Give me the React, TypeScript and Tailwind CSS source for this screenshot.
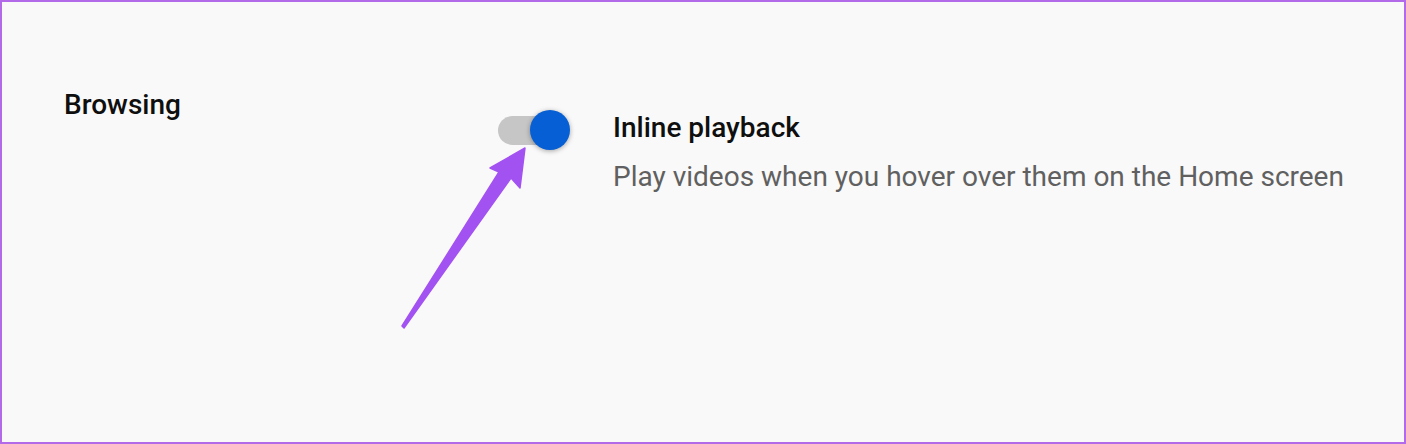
export default function App() {
  return (
    <div className="relative w-[1406px] h-[444px] border-2 border-[#b36ae8] bg-[#f9f9f9] font-['Roboto',sans-serif]">
      <div className="flex pl-[62px] pt-[87px]">
        <div className="w-[434px] text-[28px] leading-[32px] font-medium text-[#0f0f0f]">Browsing</div>

        <div className="flex pt-[23px]">
          {/* toggle */}
          <div className="relative w-[72px] h-[40px] -mt-[2px]">
            <div className="absolute left-0 top-[6px] w-[52px] h-[29px] rounded-full bg-[#c6c6c6]" />
            <div className="absolute left-[32px] top-0 w-[40px] h-[40px] rounded-full bg-[#065fd4] shadow-[0_1px_5px_rgba(0,0,0,0.35)]" />
          </div>

          <div className="ml-[43px]">
            <div className="text-[28px] leading-[32px] font-medium text-[#0f0f0f]">Inline playback</div>
            <div className="mt-[17px] text-[28px] leading-[32px] text-[#606060]">
              Play videos when you hover over them on the Home screen
            </div>
          </div>
        </div>
      </div>

      {/* annotation arrow */}
      <svg className="absolute left-0 top-0" width="1406" height="444" viewBox="0 0 1406 444">
        <path
          d="M523 146 L518 186 L509 176 L402 326 L400 324 L497 170 L488 166 Z"
          fill="#a352f2"
          stroke="#a352f2"
          strokeWidth="1.5"
          strokeLinejoin="round"
        />
      </svg>
    </div>
  );
}
